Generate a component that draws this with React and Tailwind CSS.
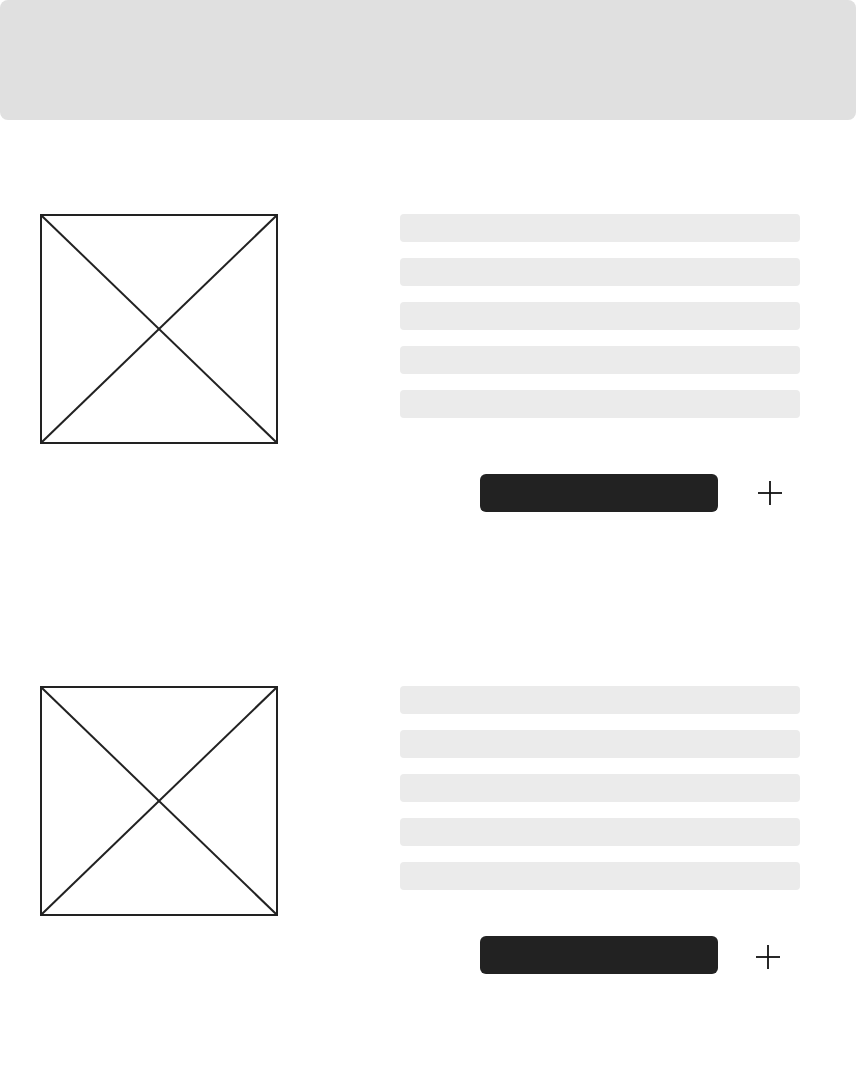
import React from "react";

function ImageBox() {
  return (
    <div className="w-[238px] h-[230px] border-2 border-[#222222] shrink-0 relative">
      <svg className="absolute inset-0 w-full h-full" viewBox="0 0 100 100" preserveAspectRatio="none">
        <line x1="0" y1="0" x2="100" y2="100" stroke="#222222" strokeWidth="2" vectorEffect="non-scaling-stroke" />
        <line x1="100" y1="0" x2="0" y2="100" stroke="#222222" strokeWidth="2" vectorEffect="non-scaling-stroke" />
      </svg>
    </div>
  );
}

function Plus() {
  return (
    <svg width="24" height="24" viewBox="0 0 24 24" className="shrink-0">
      <line x1="12" y1="0" x2="12" y2="24" stroke="#111111" strokeWidth="1.8" />
      <line x1="0" y1="12" x2="24" y2="12" stroke="#111111" strokeWidth="1.8" />
    </svg>
  );
}

function Section({ className, buttonGap, plusGap }) {
  return (
    <section className={"flex items-start pl-10 " + className}>
      <ImageBox />
      <div className="ml-[122px] w-[400px] flex flex-col">
        <div className="flex flex-col gap-4">
          {[0, 1, 2, 3, 4].map((i) => (
            <div key={i} className="h-7 rounded bg-[#ebebeb]" />
          ))}
        </div>
        <div className={"flex items-center pl-20 " + buttonGap}>
          <div className="w-[238px] h-[38px] rounded-md bg-[#222222]" />
          <div className={plusGap}>
            <Plus />
          </div>
        </div>
      </div>
    </section>
  );
}

export default function App() {
  return (
    <div className="min-h-screen bg-white w-[856px]">
      <header className="h-[120px] bg-[#e0e0e0] rounded-lg" />
      <Section className="mt-[94px]" buttonGap="mt-14" plusGap="ml-10" />
      <Section className="mt-[174px]" buttonGap="mt-[46px]" plusGap="ml-[38px] mt-1" />
    </div>
  );
}
